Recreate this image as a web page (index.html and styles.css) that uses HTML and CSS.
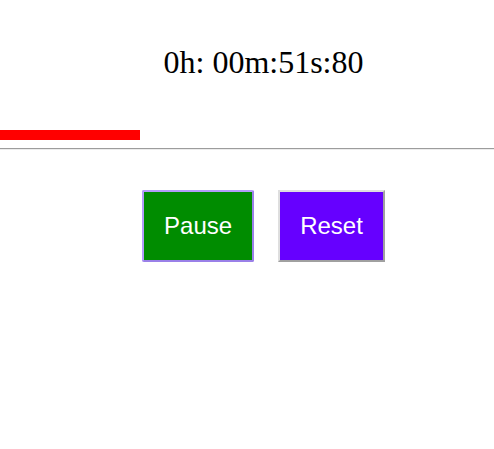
FILE: index.html
```html
<!DOCTYPE html>
<html>
<head>
<meta charset="utf-8">
<link rel="stylesheet" href="styles.css">
</head>
<body>
<div class="timer">0h: 00m:51s:80</div>
<div class="progress"><div class="progress-fill" style="width:140px"></div></div>
<div class="divider"></div>
<div class="controls">
  <button class="btn btn-pause">Pause</button>
  <button class="btn btn-reset">Reset</button>
</div>
</body>
</html>
```

FILE: styles.css
```css
html, body {
  margin: 0;
  padding: 0;
  background: #ffffff;
}

.timer {
  font-family: "Liberation Serif", "Times New Roman", serif;
  font-size: 32px;
  line-height: 37px;
  color: #000;
  text-align: center;
  padding: 44px 0 0 33px;
  height: 37px;
}

.progress {
  margin-top: 49px;
  height: 10px;
}

.progress-fill {
  height: 10px;
  background: #ff0000;
}

.divider {
  margin-top: 8px;
  height: 0;
  border-top: 1px solid #9c9c9c;
  border-bottom: 1px solid #ececec;
}

.controls {
  display: flex;
  justify-content: center;
  gap: 24px;
  padding-left: 33px;
  margin-top: 40px;
}

.btn {
  font-family: "Liberation Sans", Arial, sans-serif;
  font-size: 24px;
  line-height: 28px;
  color: #ffffff;
  padding: 20px 20px;
  border-width: 2px;
  border-style: solid;
  margin: 0;
  cursor: pointer;
}

.btn-pause {
  background: #008c00;
  border-color: #b39cfa #9a80e8 #9a80e8 #b39cfa;
  border-radius: 2px;
}

.btn-reset {
  background: #6600ff;
  border-color: #dedede #a0a0a0 #a0a0a0 #dedede;
}
```
